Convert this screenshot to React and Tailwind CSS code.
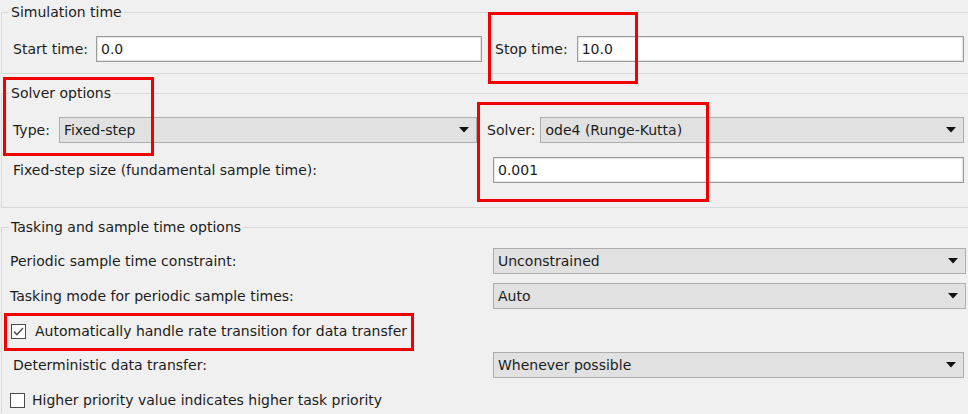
import { useState } from "react";

const Arrow = () => (
  <svg aria-hidden="true" className="shrink-0" height="6" viewBox="0 0 10 6" width="10">
    <polygon fill="#111" points="0,0 10,0 5,5.5" />
  </svg>
);

const Dropdown = ({ value, className = "" }) => (
  <div
    className={`flex h-[26px] items-center justify-between border border-[#adadad] bg-[#e1e1e1] pr-[7px] pl-[4px] ${className}`}
  >
    <span className="truncate">{value}</span>
    <Arrow />
  </div>
);

const TextBox = ({ value, className = "" }) => (
  <div
    className={`flex h-[26px] items-center border border-[#9c9c9c] bg-white pl-[4px] shadow-[inset_0_0_0_1px_#e4e4e4] ${className}`}
  >
    {value}
  </div>
);

const Checkbox = ({ checked }) => (
  <span className="flex size-[15px] shrink-0 items-center justify-center border border-[#4a4a4a] bg-white">
    {checked && (
      <svg aria-hidden="true" height="13" viewBox="0 0 13 13" width="13">
        <path d="M2 6.6 L5 9.6 L11 3" fill="none" stroke="#555" strokeWidth="1.5" />
      </svg>
    )}
  </span>
);

const Group = ({ title, className = "", children }) => (
  <fieldset
    className={`ml-px w-[990px] border-[#d9d9d9] border-t border-l ${className}`}
  >
    <legend className="ml-[7px] px-[2px] leading-4">{title}</legend>
    {children}
  </fieldset>
);

const Annotation = ({ className }) => (
  <div className={`pointer-events-none absolute border-[3px] border-[#f20000] ${className}`} />
);

export default function App() {
  const [autoRate] = useState(true);

  return (
    <div className="relative h-[414px] w-[968px] overflow-hidden bg-[#f0f0f0] pt-1 font-['DejaVu_Sans',sans-serif] text-[14px] text-[#1c1c1c]">
      <Group className="border-b pb-[11px]" title="Simulation time">
        <div className="grid w-[962px] grid-cols-2 gap-[13px] pt-4 pl-[11px]">
          <div className="flex items-center gap-2">
            <span className="shrink-0">Start time:</span>
            <TextBox className="flex-1" value="0.0" />
          </div>
          <div className="flex items-center gap-[9px]">
            <span className="shrink-0">Stop time:</span>
            <TextBox className="flex-1" value="10.0" />
          </div>
        </div>
      </Group>

      <Group className="mt-[11px] border-b pb-6" title="Solver options">
        <div className="w-[962px] pt-4 pl-[11px]">
          <div className="grid grid-cols-[464px_1fr] gap-[10px]">
            <div className="flex items-center gap-[9px]">
              <span className="shrink-0">Type:</span>
              <Dropdown className="flex-1" value="Fixed-step" />
            </div>
            <div className="flex items-center gap-[5px]">
              <span className="shrink-0">Solver:</span>
              <Dropdown className="flex-1" value="ode4 (Runge-Kutta)" />
            </div>
          </div>
          <div className="mt-[14px] flex items-center justify-between">
            <span>Fixed-step size (fundamental sample time):</span>
            <TextBox className="w-[471px]" value="0.001" />
          </div>
        </div>
      </Group>

      <Group className="mt-[11px]" title="Tasking and sample time options">
        <div className="w-[966px] pt-[13px] pl-2">
          <div className="grid grid-cols-[483px_473px] items-center">
            <span>Periodic sample time constraint:</span>
            <Dropdown value="Unconstrained" />
          </div>
          <div className="mt-[9px] grid grid-cols-[483px_473px] items-center">
            <span>Tasking mode for periodic sample times:</span>
            <Dropdown value="Auto" />
          </div>
          <label className="mt-[9px] ml-px flex h-[26px] items-center gap-[9px]">
            <Checkbox checked={autoRate} />
            <span>Automatically handle rate transition for data transfer</span>
          </label>
          <div className="mt-2 grid grid-cols-[483px_473px] items-center">
            <span className="ml-[3px]">Deterministic data transfer:</span>
            <Dropdown className="mr-[2px]" value="Whenever possible" />
          </div>
          <label className="mt-[9px] flex h-[26px] items-center gap-[7px]">
            <Checkbox checked={false} />
            <span>Higher priority value indicates higher task priority</span>
          </label>
        </div>
      </Group>

      <Annotation className="top-[12px] left-[488px] h-[72px] w-[150px]" />
      <Annotation className="top-[77px] left-[3px] h-[79px] w-[151px]" />
      <Annotation className="top-[102px] left-[477px] h-[100px] w-[232px]" />
      <Annotation className="top-[313px] left-[4px] h-[38px] w-[410px]" />
    </div>
  );
}
